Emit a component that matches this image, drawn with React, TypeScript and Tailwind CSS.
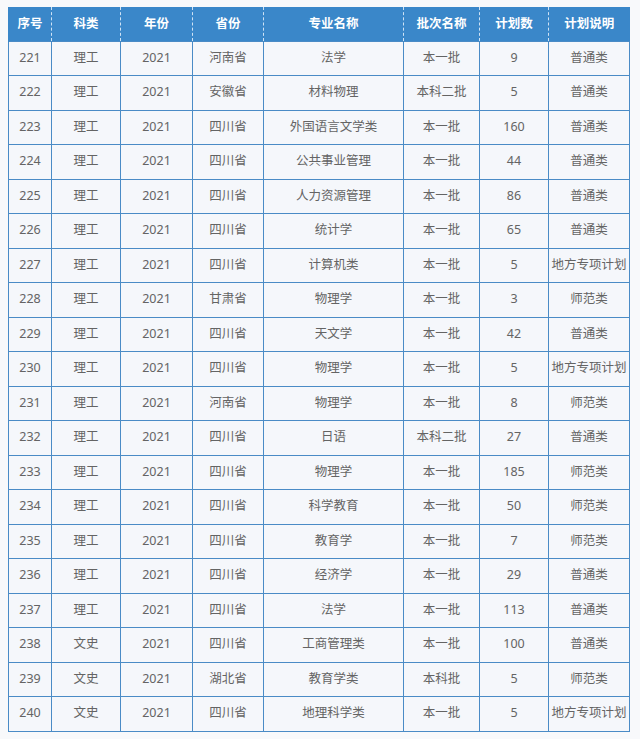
import React from "react";

const rows: string[][] = [
  ["221", "理工", "2021", "河南省", "法学", "本一批", "9", "普通类"],
  ["222", "理工", "2021", "安徽省", "材料物理", "本科二批", "5", "普通类"],
  ["223", "理工", "2021", "四川省", "外国语言文学类", "本一批", "160", "普通类"],
  ["224", "理工", "2021", "四川省", "公共事业管理", "本一批", "44", "普通类"],
  ["225", "理工", "2021", "四川省", "人力资源管理", "本一批", "86", "普通类"],
  ["226", "理工", "2021", "四川省", "统计学", "本一批", "65", "普通类"],
  ["227", "理工", "2021", "四川省", "计算机类", "本一批", "5", "地方专项计划"],
  ["228", "理工", "2021", "甘肃省", "物理学", "本一批", "3", "师范类"],
  ["229", "理工", "2021", "四川省", "天文学", "本一批", "42", "普通类"],
  ["230", "理工", "2021", "四川省", "物理学", "本一批", "5", "地方专项计划"],
  ["231", "理工", "2021", "河南省", "物理学", "本一批", "8", "师范类"],
  ["232", "理工", "2021", "四川省", "日语", "本科二批", "27", "普通类"],
  ["233", "理工", "2021", "四川省", "物理学", "本一批", "185", "师范类"],
  ["234", "理工", "2021", "四川省", "科学教育", "本一批", "50", "师范类"],
  ["235", "理工", "2021", "四川省", "教育学", "本一批", "7", "师范类"],
  ["236", "理工", "2021", "四川省", "经济学", "本一批", "29", "普通类"],
  ["237", "理工", "2021", "四川省", "法学", "本一批", "113", "普通类"],
  ["238", "文史", "2021", "四川省", "工商管理类", "本一批", "100", "普通类"],
  ["239", "文史", "2021", "湖北省", "教育学类", "本科批", "5", "师范类"],
  ["240", "文史", "2021", "四川省", "地理科学类", "本一批", "5", "地方专项计划"],
];

const headers = ["序号", "科类", "年份", "省份", "专业名称", "批次名称", "计划数", "计划说明"];
const widths = ["w-[43px]", "w-[69px]", "w-[72px]", "w-[71px]", "w-[140px]", "w-[76px]", "w-[69px]", "w-[81px]"];

export default function App() {
  return (
    <div
      className="w-[640px] h-[739px] bg-[#f8f9fb] pt-[7px] pl-[8px]"
      style={{ fontFamily: '"Noto Sans", "Noto Sans CJK SC", sans-serif' }}
    >
      <table className="w-[621px] table-fixed border-collapse text-[12.5px]">
        <colgroup>
          {widths.map((w, i) => (
            <col key={i} className={w} />
          ))}
        </colgroup>
        <thead>
          <tr className="h-[34px] bg-[#3a87c9]">
            {headers.map((h, i) => (
              <th
                key={i}
                className={
                  i === 0
                    ? "p-0 text-center font-bold text-white border-l border-solid border-l-[#3a87c9]"
                    : "p-0 text-center font-bold text-white border-l border-dashed border-l-[#cfe3f5]"
                }
                style={{ fontFamily: '"Noto Sans CJK SC", sans-serif' }}
              >
                {h}
              </th>
            ))}
          </tr>
        </thead>
        <tbody>
          {rows.map((r, ri) => (
            <tr key={ri} className="h-[34.5px] bg-[#f5f7fb]">
              {r.map((c, ci) => (
                <td
                  key={ci}
                  className="p-0 text-center text-[#646464] border border-[#4a8bc6] whitespace-nowrap"
                >
                  {c}
                </td>
              ))}
            </tr>
          ))}
        </tbody>
      </table>
    </div>
  );
}
